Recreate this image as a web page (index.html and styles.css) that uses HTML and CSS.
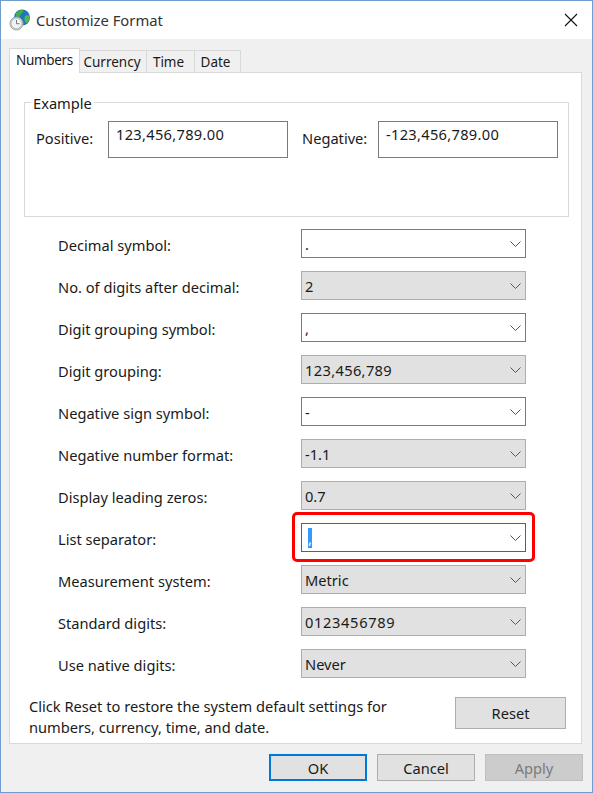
FILE: index.html
```html
<!DOCTYPE html>
<html lang="en">
<head>
  <meta charset="UTF-8">
  <title>Customize Format</title>
  <link rel="stylesheet" href="styles.css">
</head>
<body>
  <div class="window">
    <header class="titlebar">
      <svg class="app-icon" width="22" height="22" viewBox="0 0 22 22">
        <circle cx="13" cy="8.500" r="8" fill="#1a78c2"/>
        <path d="M8 3c2-2 5-2.500 6-2 1 2-1 3-2 4s-1 3-3 3-3-3-1-5z" fill="#49ad45"/>
        <path d="M16 7c1.500-1 3.500-1 4.500 0 .3 3-1 6-3 7-2 0-2.500-5-1.500-7z" fill="#58b84a"/>
        <circle cx="7.500" cy="14.500" r="6.500" fill="#c9cccf" stroke="#a3a7aa" stroke-width="1"/>
        <circle cx="7.500" cy="14.500" r="4.600" fill="#f2f3f3"/>
        <path d="M7.500 11v3.700h3" fill="none" stroke="#777" stroke-width="1"/>
      </svg>
      <h1 class="title">Customize Format</h1>
      <svg class="close" width="14" height="14" viewBox="0 0 14 14">
        <path d="M1 1l12 12M13 1L1 13" stroke="#111" stroke-width="1.100" fill="none"/>
      </svg>
    </header>

    <div class="content">
      <nav class="tabs">
        <div class="tab active">Numbers</div>
        <div class="tab tab-currency">Currency</div>
        <div class="tab tab-time">Time</div>
        <div class="tab tab-date">Date</div>
      </nav>

      <main class="panel">
        <fieldset class="example">
          <legend>Example</legend>
          <div class="example-row">
            <span class="example-label">Positive:</span>
            <div class="sample">123,456,789.00</div>
            <span class="example-label negative">Negative:</span>
            <div class="sample">-123,456,789.00</div>
          </div>
        </fieldset>

        <div class="rows">
          <div class="row"><label>Decimal symbol:</label><div class="combo edit"><span>.</span><svg class="chevron" width="11" height="6" viewBox="0 0 11 6"><path d="M.5.5l5 5 5-5" fill="none" stroke="#555"/></svg></div></div>
          <div class="row"><label>No. of digits after decimal:</label><div class="combo"><span>2</span><svg class="chevron" width="11" height="6" viewBox="0 0 11 6"><path d="M.5.5l5 5 5-5" fill="none" stroke="#555"/></svg></div></div>
          <div class="row"><label>Digit grouping symbol:</label><div class="combo edit"><span>,</span><svg class="chevron" width="11" height="6" viewBox="0 0 11 6"><path d="M.5.5l5 5 5-5" fill="none" stroke="#555"/></svg></div></div>
          <div class="row"><label>Digit grouping:</label><div class="combo"><span class="digits">123,456,789</span><svg class="chevron" width="11" height="6" viewBox="0 0 11 6"><path d="M.5.5l5 5 5-5" fill="none" stroke="#555"/></svg></div></div>
          <div class="row"><label>Negative sign symbol:</label><div class="combo edit"><span>-</span><svg class="chevron" width="11" height="6" viewBox="0 0 11 6"><path d="M.5.5l5 5 5-5" fill="none" stroke="#555"/></svg></div></div>
          <div class="row"><label>Negative number format:</label><div class="combo"><span>-1.1</span><svg class="chevron" width="11" height="6" viewBox="0 0 11 6"><path d="M.5.5l5 5 5-5" fill="none" stroke="#555"/></svg></div></div>
          <div class="row"><label>Display leading zeros:</label><div class="combo"><span>0.7</span><svg class="chevron" width="11" height="6" viewBox="0 0 11 6"><path d="M.5.5l5 5 5-5" fill="none" stroke="#555"/></svg></div></div>
          <div class="row highlighted"><label>List separator:</label><div class="combo edit focused"><span class="selected">,</span><svg class="chevron" width="11" height="6" viewBox="0 0 11 6"><path d="M.5.5l5 5 5-5" fill="none" stroke="#555"/></svg></div></div>
          <div class="row"><label>Measurement system:</label><div class="combo"><span>Metric</span><svg class="chevron" width="11" height="6" viewBox="0 0 11 6"><path d="M.5.5l5 5 5-5" fill="none" stroke="#555"/></svg></div></div>
          <div class="row"><label>Standard digits:</label><div class="combo"><span class="digits-wide">0123456789</span><svg class="chevron" width="11" height="6" viewBox="0 0 11 6"><path d="M.5.5l5 5 5-5" fill="none" stroke="#555"/></svg></div></div>
          <div class="row"><label>Use native digits:</label><div class="combo"><span>Never</span><svg class="chevron" width="11" height="6" viewBox="0 0 11 6"><path d="M.5.5l5 5 5-5" fill="none" stroke="#555"/></svg></div></div>
        </div>

        <div class="reset-row">
          <p class="reset-text">Click Reset to restore the system default settings for numbers, currency, time, and date.</p>
          <button class="btn reset">Reset</button>
        </div>
      </main>

      <footer class="actions">
        <button class="btn primary">OK</button>
        <button class="btn">Cancel</button>
        <button class="btn disabled">Apply</button>
      </footer>
    </div>
  </div>
</body>
</html>
```

FILE: styles.css
```css
:root {
  --panel-line: #d9d9d9;
  --face: #e1e1e1;
  --face-line: #adadad;
  --accent: #0078d7;
}
*, *::after {
  box-sizing: border-box;
}
html, body {
  margin: 0;
  padding: 0;
}
body {
  font-family: "Noto Sans", "Open Sans", sans-serif;
  font-size: 14.65px;
  color: #1a1a1a;
  background: #fff;
}
.window {
  width: 593px;
  height: 793px;
  border: 1px solid #6f9dd0;
  display: flex;
  flex-direction: column;
  background: #f0f0f0;
}
.titlebar {
  height: 38px;
  background: #fff;
  display: flex;
  align-items: center;
  padding: 0 14px 0 8px;
  flex: none;
}
.app-icon {
  flex: none;
  margin-right: 5px;
}
.title {
  margin: 0;
  font-size: 14.8px;
  font-weight: 400;
  color: #333;
  flex: 1;
}
.close {
  flex: none;
}
.content {
  flex: 1;
  padding: 9px 8px 0;
  display: flex;
  flex-direction: column;
}
.tabs {
  display: flex;
  align-items: flex-end;
  height: 25px;
  margin-bottom: -1px;
  position: relative;
  z-index: 1;
}
.tab {
  height: 23px;
  border: 1px solid var(--panel-line);
  border-left: 0;
  display: flex;
  align-items: center;
  justify-content: center;
  font-size: 13.5px;
}
.tab.active {
  width: 71px;
  height: 25px;
  background: #fff;
  border-left: 1px solid var(--panel-line);
  border-bottom: 0;
  letter-spacing: -0.3px;
  padding-bottom: 2px;
}
.tab-currency { width: 67px; padding-right: 2px; }
.tab-time { width: 48px; padding-right: 4px; }
.tab-date { width: 46px; padding-right: 4px; }
.panel {
  height: 672px;
  width: 573px;
  background: #fff;
  border: 1px solid var(--panel-line);
  padding: 18px 12px 0 14px;
  flex: none;
}
.example {
  margin: 0;
  height: 126px;
  width: 545px;
  padding: 0;
  border: 1px solid var(--panel-line);
}
.example legend {
  margin-left: 6px;
  padding: 3px 2px 1px;
  line-height: 18px;
}
.example-row {
  display: flex;
  align-items: flex-start;
  padding: 8px 0 0 11px;
}
.example-label {
  width: 72px;
  line-height: 34px;
}
.negative {
  width: 76px;
  margin-left: 14px;
}
.sample {
  width: 180px;
  height: 37px;
  border: 1px solid #7a7a7a;
  padding: 2px 7px;
  line-height: 21px;
  letter-spacing: 0.3px;
}
.rows {
  display: flex;
  flex-direction: column;
  gap: 13px;
  margin-top: 12px;
}
.row {
  display: flex;
  align-items: center;
  height: 29px;
  padding-left: 34px;
  position: relative;
}
.row label {
  width: 243px;
  padding-top: 2px;
}
.combo {
  width: 225px;
  height: 29px;
  border: 1px solid var(--face-line);
  background: var(--face);
  display: flex;
  align-items: center;
  justify-content: space-between;
  padding: 1px 4px 0 3px;
}
.combo.edit {
  background: #fff;
  border-color: #7a7a7a;
}
.combo.focused {
  border-color: var(--accent);
}
.digits {
  letter-spacing: 0.35px;
}
.digits-wide {
  letter-spacing: 0.65px;
}
.chevron {
  flex: none;
}
.selected {
  background: #3399ff;
  color: #fff;
  line-height: 20px;
  width: 4px;
  margin-left: 3px;
  overflow: hidden;
}
.highlighted::after {
  content: "";
  position: absolute;
  left: 268px;
  top: -11px;
  width: 243px;
  height: 50px;
  border: 3px solid #f00;
  border-radius: 5px;
}
.reset-row {
  display: flex;
  justify-content: space-between;
  align-items: flex-start;
  margin-top: 19px;
  padding-left: 5px;
  padding-right: 3px;
}
.reset-text {
  margin: 0;
  width: 380px;
  line-height: 21px;
  margin-top: -1px;
}
.btn {
  font: inherit;
  color: #1a1a1a;
  width: 98px;
  height: 27px;
  padding: 0;
  background: var(--face);
  border: 1px solid var(--face-line);
}
.reset {
  width: 111px;
  height: 32px;
}
.actions {
  display: flex;
  justify-content: flex-end;
  gap: 10px;
  margin-top: 10px;
  padding-right: 1px;
}
.btn.primary {
  border: 2px solid var(--accent);
}
.btn.disabled {
  background: #cccccc;
  border-color: #bfbfbf;
  color: #7a7a7a;
}
```
